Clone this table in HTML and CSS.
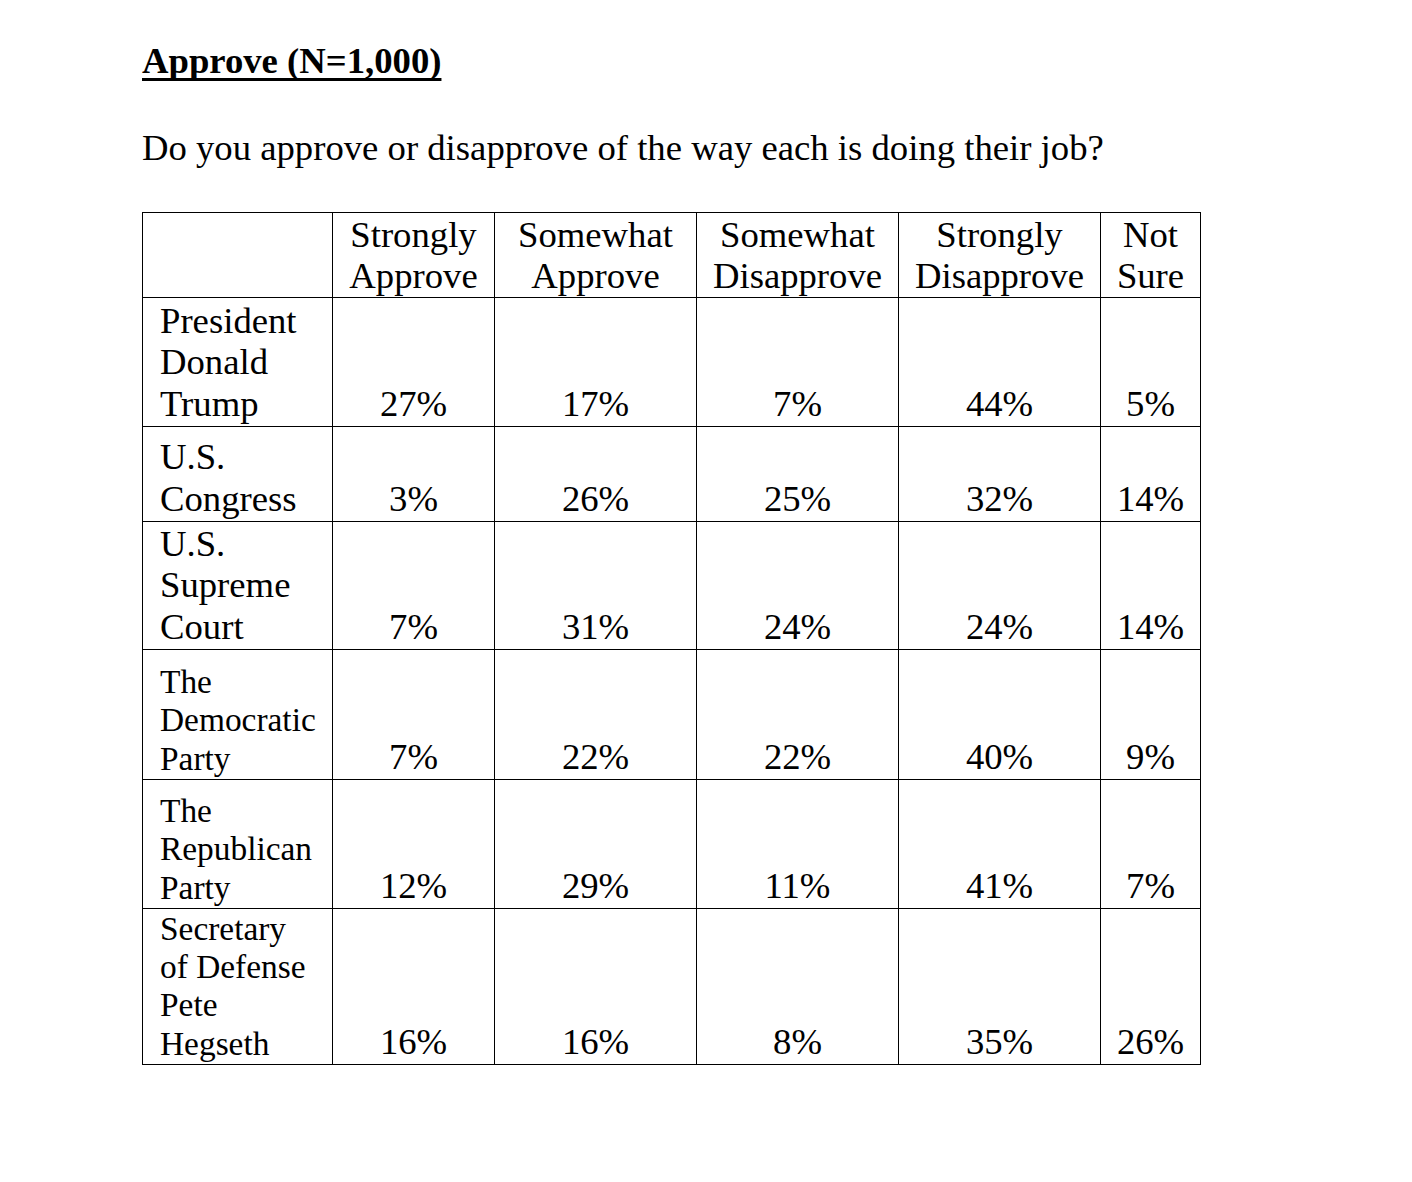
FILE: index.html
```html
<!DOCTYPE html>
<html lang="en">
<head>
<meta charset="utf-8">
<title>Approve (N=1,000)</title>
<link rel="stylesheet" href="styles.css">
</head>
<body>
<main class="page">
  <h1 class="title">Approve (N=1,000)</h1>
  <p class="question">Do you approve or disapprove of the way each is doing their job?</p>
  <table class="grid">
    <colgroup>
      <col class="c-label">
      <col class="c-sa">
      <col class="c-wide">
      <col class="c-wide">
      <col class="c-wide">
      <col class="c-ns">
    </colgroup>
    <thead>
      <tr class="r-head">
        <th class="label"></th>
        <th>Strongly<br>Approve</th>
        <th>Somewhat<br>Approve</th>
        <th>Somewhat<br>Disapprove</th>
        <th>Strongly<br>Disapprove</th>
        <th>Not<br>Sure</th>
      </tr>
    </thead>
    <tbody>
      <tr class="r1">
        <td class="label">President<br>Donald<br>Trump</td>
        <td>27%</td><td>17%</td><td>7%</td><td>44%</td><td>5%</td>
      </tr>
      <tr class="r2">
        <td class="label">U.S.<br>Congress</td>
        <td>3%</td><td>26%</td><td>25%</td><td>32%</td><td>14%</td>
      </tr>
      <tr class="r3">
        <td class="label">U.S.<br>Supreme<br>Court</td>
        <td>7%</td><td>31%</td><td>24%</td><td>24%</td><td>14%</td>
      </tr>
      <tr class="r4">
        <td class="label small">The<br>Democratic<br>Party</td>
        <td>7%</td><td>22%</td><td>22%</td><td>40%</td><td>9%</td>
      </tr>
      <tr class="r5">
        <td class="label small">The<br>Republican<br>Party</td>
        <td>12%</td><td>29%</td><td>11%</td><td>41%</td><td>7%</td>
      </tr>
      <tr class="r6">
        <td class="label small">Secretary<br>of Defense<br>Pete<br>Hegseth</td>
        <td>16%</td><td>16%</td><td>8%</td><td>35%</td><td>26%</td>
      </tr>
    </tbody>
  </table>
</main>
</body>
</html>
```

FILE: styles.css
```css
html, body {
  margin: 0;
  padding: 0;
  background: #ffffff;
}

body {
  font-family: "Liberation Serif", "Times New Roman", serif;
  color: #000000;
  font-size: 36.7px;
  line-height: 41.5px;
}

.page {
  padding: 40px 0 0 142px;
}

.title {
  margin: 0;
  font-size: 36.7px;
  font-weight: bold;
  line-height: 41.5px;
  text-decoration: underline;
  text-decoration-thickness: 3px;
  text-underline-offset: 5px;
  text-decoration-skip-ink: none;
  display: inline-block;
}

.question {
  margin: 45px 0 0 0;
  font-size: 36.7px;
  line-height: 41.5px;
}

.grid {
  margin-top: 44px;
  border-collapse: collapse;
  table-layout: fixed;
  width: 1059px;
}

.c-label { width: 190px; }
.c-sa { width: 162px; }
.c-wide { width: 202px; }
.c-ns { width: 100px; }

.grid th,
.grid td {
  border: 1px solid #000000;
  padding: 0 4px 2px 4px;
  text-align: center;
  vertical-align: bottom;
  font-weight: normal;
  font-size: 36.7px;
  line-height: 41.5px;
}

.grid th {
  line-height: 40.5px;
  padding-bottom: 1px;
}

.grid .label {
  text-align: left;
  padding-left: 17px;
  padding-right: 2px;
}

.grid .label.small {
  font-size: 33.4px;
  line-height: 38.3px;
  padding-bottom: 1px;
}

.r-head { height: 85px; }
.r1 { height: 129px; }
.r2 { height: 95px; }
.r3 { height: 128px; }
.r4 { height: 130px; }
.r5 { height: 129px; }
.r6 { height: 156px; }
```
